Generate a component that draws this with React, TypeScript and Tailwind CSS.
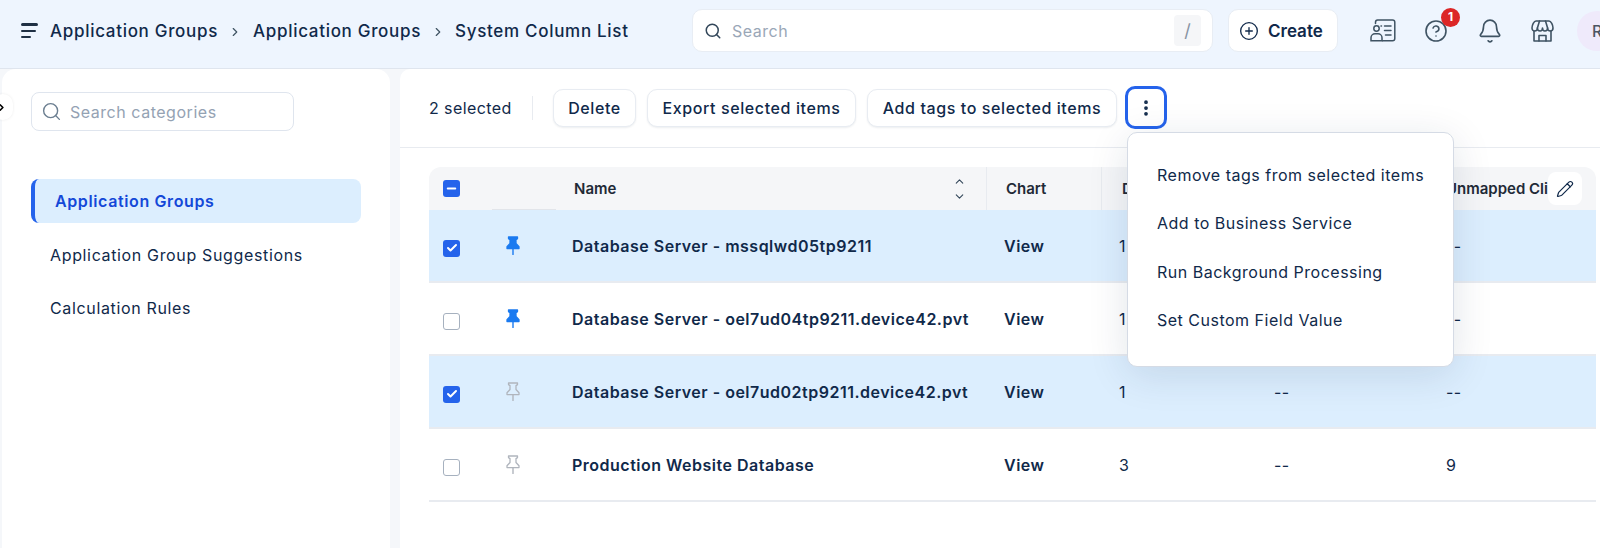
import { Bell, ChevronDown, ChevronRight, ChevronUp, CircleHelp, CirclePlus, Check, EllipsisVertical, Minus, Pencil, Search } from "lucide-react";

const rows = [
  { name: "Database Server - mssqlwd05tp9211", selected: true, pinned: true, d: "1", e: "--", u: "--" },
  { name: "Database Server - oel7ud04tp9211.device42.pvt", selected: false, pinned: true, d: "1", e: "--", u: "--" },
  { name: "Database Server - oel7ud02tp9211.device42.pvt", selected: true, pinned: false, d: "1", e: "--", u: "--" },
  { name: "Production Website Database", selected: false, pinned: false, d: "3", e: "--", u: "9" },
];

const PinIcon = ({ filled }: { filled: boolean }) => (
  <svg width="14" height="19" viewBox="0 0 14 19" className={filled ? "text-[#1a7af0]" : "text-[#b0b5bd]"}>
    <path
      d="M2.5 1H11.5V2.6L10 3.6V7.5L13 10.8V12.6H1V10.8L4 7.5V3.6L2.5 2.6Z"
      fill={filled ? "currentColor" : "none"}
      stroke="currentColor"
      strokeWidth="1.3"
      strokeLinejoin="round"
    />
    <path d="M7 12.6V18.5" stroke="currentColor" strokeWidth="1.4" strokeLinecap="round" />
  </svg>
);

const ContactsIcon = () => (
  <svg width="26" height="23" viewBox="0 0 26 23" fill="none" stroke="#3f5363" strokeWidth="1.5" strokeLinecap="round">
    <path d="M5.5 4.5V3.2C5.5 2 6.4 1 7.6 1H22.5C23.8 1 24.8 2 24.8 3.2V19.5C24.8 20.8 23.8 21.8 22.5 21.8H12.5" />
    <circle cx="6.5" cy="9.5" r="2.7" />
    <path d="M1 21.8V18.8C1 16.5 2.8 14.8 5 14.8H8C10.2 14.8 12 16.5 12 18.8V21.8Z" />
    <path d="M14.5 7H21M14.5 11.5H21M15.5 16H21M11 7H11.5" />
  </svg>
);

const StoreIcon = () => (
  <svg width="23" height="22" viewBox="0 0 23 22" fill="none" stroke="#3f5363" strokeWidth="1.6" strokeLinejoin="round" strokeLinecap="round">
    <path d="M5 1H18C20 1 22 5 22 8C22 9.8 20.8 11 19.3 11C17.8 11 16.6 9.8 16.6 8C16.6 9.8 15.2 11 13.9 11C12.6 11 11.5 9.8 11.5 8C11.5 9.8 10.4 11 9.1 11C7.8 11 6.4 9.8 6.4 8C6.4 9.8 5.2 11 3.7 11C2.2 11 1 9.8 1 8C1 5 3 1 5 1Z" />
    <path d="M8.5 1L6.4 8M14.5 1L16.6 8" />
    <path d="M3 11V21H20V11" />
    <path d="M8 21V15.5H15V21" />
  </svg>
);

const Checkbox = ({ checked, mixed }: { checked?: boolean; mixed?: boolean }) =>
  checked || mixed ? (
    <span className="flex h-[17px] w-[17px] items-center justify-center rounded-[3px] bg-[#2563eb] text-white">
      {mixed ? <Minus size={13} strokeWidth={3.5} /> : <Check size={12} strokeWidth={4} />}
    </span>
  ) : (
    <span className="block h-[17px] w-[17px] rounded-[3px] border-[1.5px] border-[#a6b1bf] bg-white" />
  );

const ActionButton = ({ label, width }: { label: string; width: string }) => (
  <button className={`flex h-[38px] items-center justify-center rounded-[10px] border border-[#e8ecf2] bg-white text-[16px] font-medium tracking-[0.6px] text-[#10294a] shadow-[0_1px_2px_rgba(15,40,70,0.08)] ${width}`}>
    {label}
  </button>
);

export default function App() {
  return (
    <div className="flex h-[548px] w-[1600px] flex-col overflow-hidden bg-[#f5f7fa] font-['Inter',sans-serif] text-[#10294a]">
      <header className="flex h-[69px] shrink-0 items-center overflow-hidden border-b border-[#dfe5ee] bg-[#eef5fe] pb-[7px]">
        <div className="ml-[21px] flex w-[18px] shrink-0 flex-col gap-[4px]">
          <span className="h-[2.5px] w-[17px] rounded bg-[#1f3044]" />
          <span className="h-[2px] w-[15px] rounded bg-[#1f3044]" />
          <span className="h-[2.5px] w-[10px] rounded bg-[#1f3044]" />
        </div>
        <nav className="ml-[11px] flex w-[642px] shrink-0 items-center pt-[2px] text-[17px] font-medium tracking-[0.7px] text-[#10294a]">
          <span className="w-[167px] whitespace-nowrap">Application Groups</span>
          <ChevronRight size={14} className="mx-[11px] text-[#3f5363]" />
          <span className="w-[167px] whitespace-nowrap">Application Groups</span>
          <ChevronRight size={14} className="ml-[11px] mr-[10px] text-[#3f5363]" />
          <span className="whitespace-nowrap">System Column List</span>
        </nav>
        <div className="flex h-[43px] w-[521px] shrink-0 items-center rounded-[10px] border border-[#e8edf4] bg-white pl-[11px] pr-[11px]">
          <Search size={18} className="text-[#33475a]" />
          <span className="ml-[10px] flex-1 text-[16px] tracking-[0.5px] text-[#9aa7b7]">Search</span>
          <span className="flex h-[31px] w-[27px] items-center justify-center rounded-[4px] bg-[#f5f6f8] text-[18px] text-[#8793a3]">/</span>
        </div>
        <button className="ml-[15px] flex h-[43px] w-[110px] shrink-0 items-center gap-[9px] rounded-[10px] border border-[#e8edf4] bg-white pl-[10px] text-[17px] font-semibold text-[#10294a]">
          <CirclePlus size={20} strokeWidth={1.6} />
          <span className="pt-[2px]">Create</span>
        </button>
        <div className="ml-[32px] shrink-0"><ContactsIcon /></div>
        <div className="relative ml-[28px] shrink-0">
          <CircleHelp size={24} strokeWidth={1.6} className="text-[#3f5363]" />
          <span className="absolute -right-[12px] -top-[11px] flex h-[19px] w-[19px] items-center justify-center rounded-full bg-[#dc2626] text-[12px] font-bold text-white">1</span>
        </div>
        <Bell size={26} strokeWidth={1.5} className="ml-[29px] shrink-0 text-[#3f5363]" />
        <div className="ml-[28px] shrink-0"><StoreIcon /></div>
        <div className="ml-[23px] flex h-[40px] w-[40px] shrink-0 items-center rounded-full bg-[#efeafb] pl-[15px] text-[16px] font-medium text-[#4b5563]">R</div>
      </header>

      <div className="flex min-h-0 flex-1 pl-[2px]">
        <aside className="relative w-[388px] shrink-0 rounded-t-[14px] bg-white pl-[29px] pt-[23px]">
          <div className="absolute -left-[9px] top-[25px] flex h-[26px] w-[20px] items-center justify-end rounded-full bg-white pr-[6px] text-black shadow-[0_0_3px_rgba(0,0,0,0.08)]">
            <ChevronRight size={11} strokeWidth={3.5} />
          </div>
          <div className="flex h-[39px] w-[263px] items-center rounded-[8px] border border-[#dfe5ee] pl-[9px]">
            <Search size={21} strokeWidth={1.6} className="text-[#6b7e90]" />
            <span className="ml-[8px] text-[16px] tracking-[0.53px] text-[#94a2b3]">Search categories</span>
          </div>
          <ul className="mt-[48px] w-[330px] text-[16px] tracking-[0.65px]">
            <li className="flex h-[44px] items-center rounded-[8px] border-l-[4px] border-[#2563eb] bg-[#dceefe] pl-[20px] font-semibold tracking-[0.62px] text-[#1448d8]">Application Groups</li>
            <li className="flex h-[53px] items-center pl-[19px] pt-[10px]">Application Group Suggestions</li>
            <li className="flex h-[53px] items-center pl-[19px] pt-[10px]">Calculation Rules</li>
          </ul>
        </aside>

        <main className="relative ml-[10px] min-w-0 flex-1 rounded-tl-[10px] bg-white">
          <div className="flex h-[79px] items-center border-b border-[#e8ebf0] pb-[1px] pl-[29px]">
            <span className="w-[103px] text-[16px] tracking-[0.4px]">2 selected</span>
            <span className="h-[24px] w-px bg-[#e8ebf0]" />
            <div className="ml-[20px] flex items-center gap-[11px]">
              <ActionButton label="Delete" width="w-[83px]" />
              <ActionButton label="Export selected items" width="w-[209px]" />
              <ActionButton label="Add tags to selected items" width="w-[250px]" />
            </div>
            <button className="ml-[8px] flex h-[43px] w-[42px] items-center justify-center rounded-[10px] border-[3px] border-[#2563eb] bg-white text-[#10294a]">
              <EllipsisVertical size={20} strokeWidth={2.5} />
            </button>
          </div>

          <div className="ml-[29px] mr-[4px] mt-[19px]">
            <div className="flex h-[43px] items-center rounded-t-[12px] bg-[#f5f6f8] text-[15px] font-semibold text-[#1f2a37]">
              <div className="w-[63px] pl-[14px]"><Checkbox mixed /></div>
              <div className="h-full w-[64px] border-b border-[#e2e5ea]" />
              <div className="flex h-full w-[431px] items-center justify-between border-r border-[#e8ebf0] pl-[18px] pr-[20px]">
                <span className="pt-[2px]">Name</span>
                <span className="flex flex-col text-[#33475a]">
                  <ChevronUp size={13} strokeWidth={2} />
                  <ChevronDown size={13} strokeWidth={2} className="mt-[2px]" />
                </span>
              </div>
              <div className="flex h-full w-[115px] items-center border-r border-[#e8ebf0] pl-[19px] pt-[2px]">Chart</div>
              <div className="w-[156px] pl-[20px] pt-[2px]">Database</div>
              <div className="w-[188px]" />
              <div className="min-w-0 flex-1 overflow-hidden whitespace-nowrap pt-[2px]">Unmapped Clients</div>
            </div>
            {rows.map((row) => (
              <div key={row.name} className={`flex h-[73px] items-center border-b-2 border-[#e8ebf0] text-[16px] tracking-[0.5px] ${row.selected ? "bg-[#dceefe]" : "bg-white"}`}>
                <div className="w-[63px] pl-[14px] pt-[5px]"><Checkbox checked={row.selected} /></div>
                <div className="w-[64px] pl-[14px]"><PinIcon filled={row.pinned} /></div>
                <div className="w-[430px] pl-[16px] font-semibold">{row.name}</div>
                <div className="w-[115px] pl-[18px] font-semibold">View</div>
                <div className="w-[157px] pl-[18px]">{row.d}</div>
                <div className="w-[188px] pl-[16px]">{row.e}</div>
                <div className="flex-1">{row.u}</div>
              </div>
            ))}
          </div>

          <button className="absolute left-[1148px] top-[103px] flex h-[33px] w-[34px] items-center justify-center rounded-[8px] bg-white text-[#10294a]">
            <Pencil size={18} strokeWidth={1.6} />
          </button>

          <div className="absolute left-[727px] top-[63px] w-[327px] rounded-[10px] border border-[#d5dbe5] bg-white pb-[22px] pt-[18px] text-[16px] tracking-[0.5px] text-[#10294a] shadow-[0_8px_40px_rgba(15,40,70,0.12)]">
            {["Remove tags from selected items", "Add to Business Service", "Run Background Processing", "Set Custom Field Value"].map((item) => (
              <div key={item} className="flex h-[48.3px] items-center pl-[29px]">{item}</div>
            ))}
          </div>
        </main>
      </div>
    </div>
  );
}
